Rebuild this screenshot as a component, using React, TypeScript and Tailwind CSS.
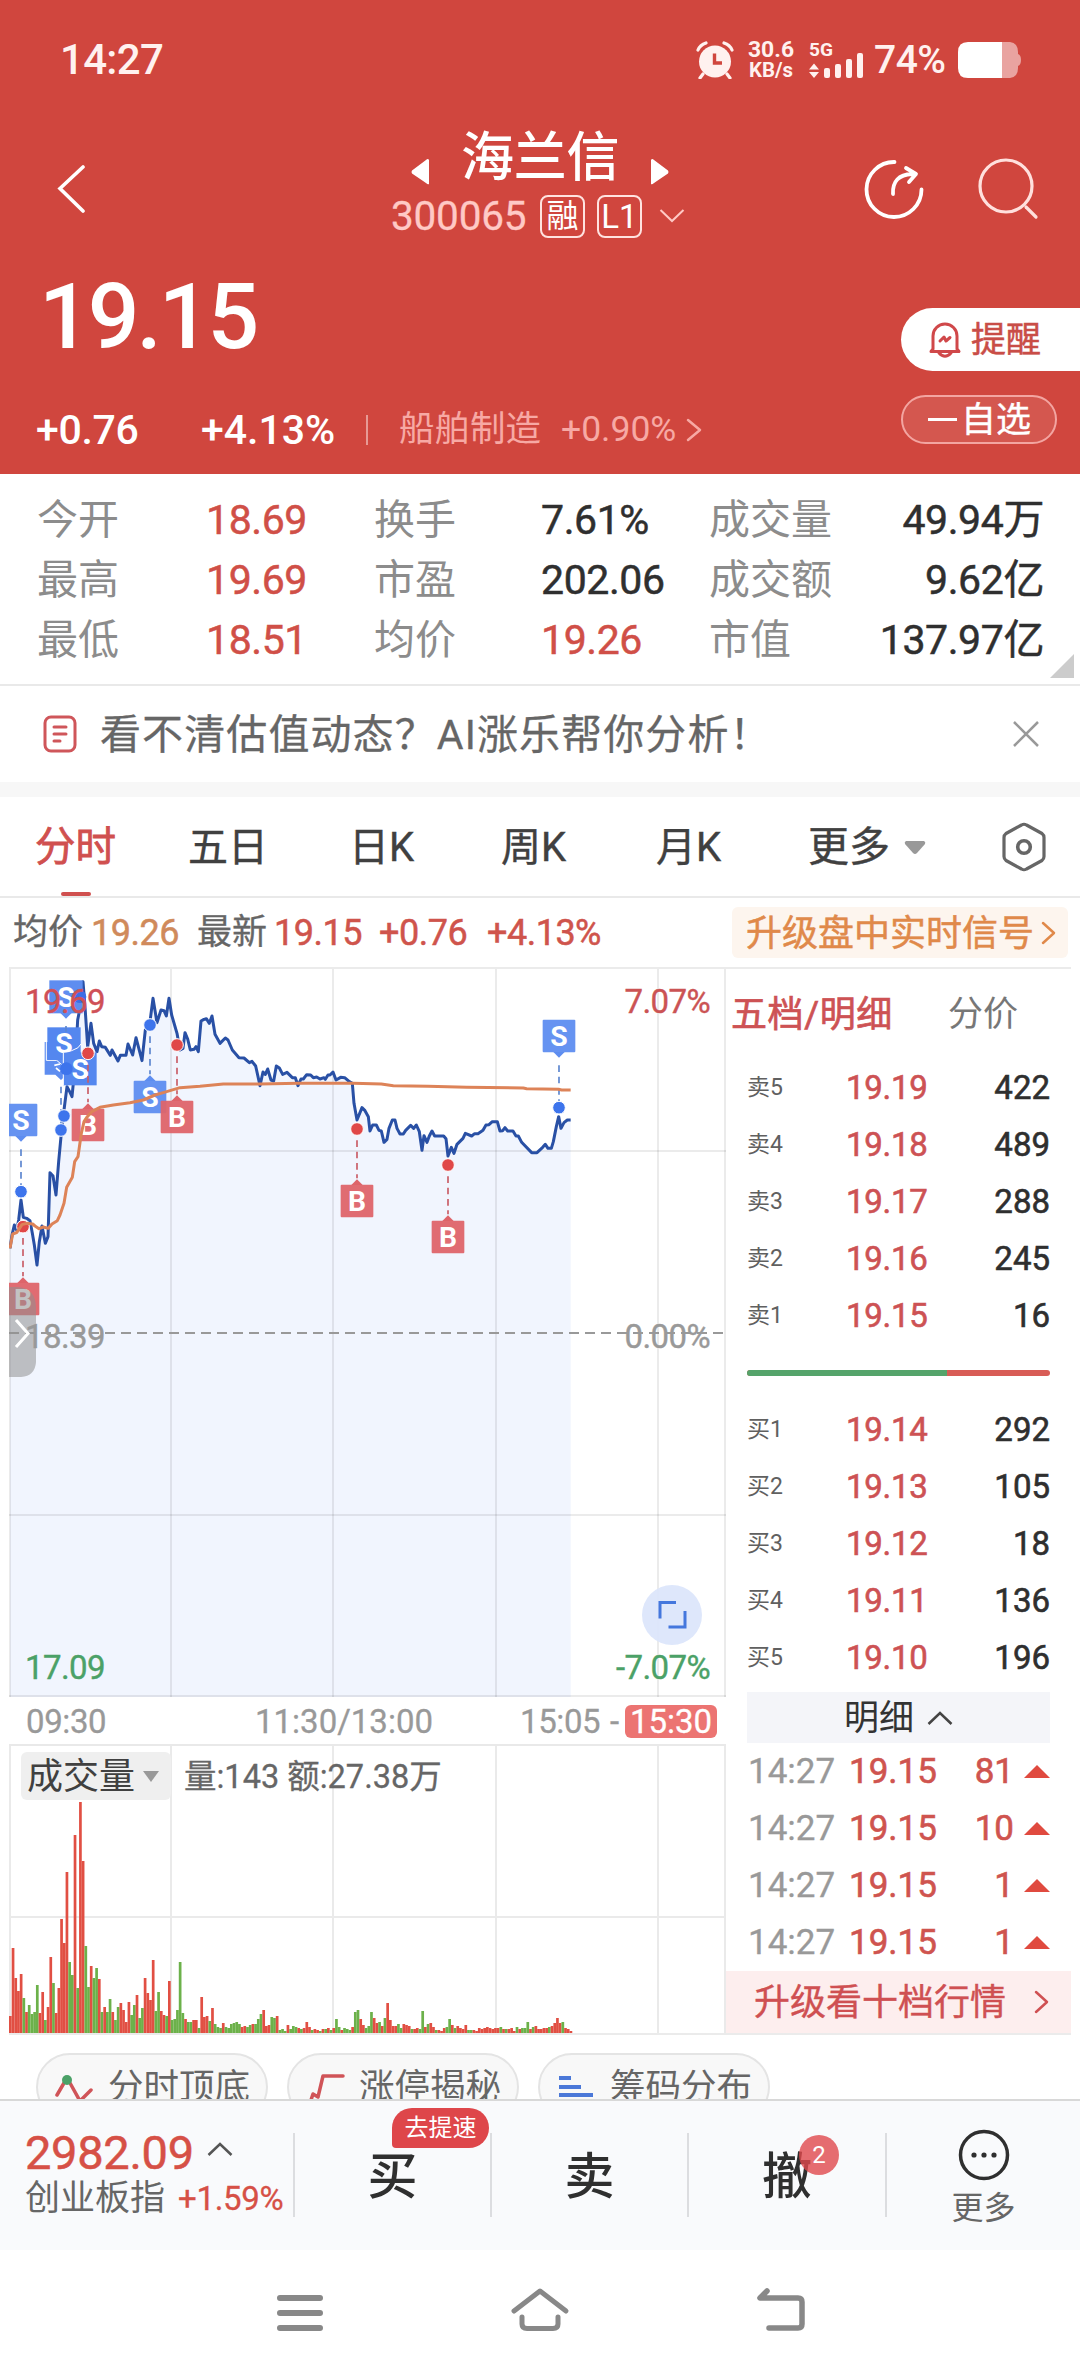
import type { ReactNode } from "react";

type Tone = "up" | "flat";

const STATS: { label: string; value: string; tone: Tone }[][] = [
  [
    { label: "今开", value: "18.69", tone: "up" },
    { label: "换手", value: "7.61%", tone: "flat" },
    { label: "成交量", value: "49.94万", tone: "flat" },
  ],
  [
    { label: "最高", value: "19.69", tone: "up" },
    { label: "市盈", value: "202.06", tone: "flat" },
    { label: "成交额", value: "9.62亿", tone: "flat" },
  ],
  [
    { label: "最低", value: "18.51", tone: "up" },
    { label: "均价", value: "19.26", tone: "up" },
    { label: "市值", value: "137.97亿", tone: "flat" },
  ],
];

const SELLS = [
  ["卖5", "19.19", "422"],
  ["卖4", "19.18", "489"],
  ["卖3", "19.17", "288"],
  ["卖2", "19.16", "245"],
  ["卖1", "19.15", "16"],
];

const BUYS = [
  ["买1", "19.14", "292"],
  ["买2", "19.13", "105"],
  ["买3", "19.12", "18"],
  ["买4", "19.11", "136"],
  ["买5", "19.10", "196"],
];

const TICKS = ["81", "10", "1", "1"];

// one entry per minute: r = up, g = down, followed by the bar height
const VOLUME =
  "r17 r85 r55 r42 r59 g35 r21 g28 g19 g21 g48 r20 r41 g13 r26 r76 g50 r20 r45 r114 r90 r161 g71 g58 r198 g45 r231 r172 g87 g46 r67 g55 g65 r54 g21 r26 g21 g34 r21 g13 g26 r30 r23 r11 r31 g18 g28 r38 g15 g25 r55 r40 r33 r73 g22 g41 r22 r18 g17 r52 g13 g14 g23 g71 g20 r14 g11 g11 r13 r13 g5 r36 r16 r17 g12 r25 g9 g6 g5 r10 g6 g5 g9 g10 g11 g9 r6 r7 g6 g8 r9 g9 g14 g19 r23 r7 r8 g16 g15 r17 g3 g4 g2 r8 g4 g7 g6 r5 g4 r5 r11 r6 g3 r4 r3 g2 r4 g4 r5 g3 r5 g14 g6 r3 g5 g4 g3 r6 g21 g23 r14 r8 g5 g7 g21 r15 r10 g11 r7 g15 r30 r13 r7 r7 g9 g5 r9 r8 r7 g4 r4 r5 g4 g22 r6 g9 r10 r6 g3 r3 r2 r5 g6 g14 r8 g5 r7 r5 r4 r8 g3 g3 r3 r2 r5 r4 r5 r6 r5 r4 r5 r5 g6 r4 g4 r4 r5 r2 g6 r4 g5 g5 g11 r4 g6 r7 r4 r4 r5 r5 g6 r7 r10 r15 r10 g11 r5 r4 r2".split(
    " "
  );

// price and average lines are stored at 3x
const PRICE =
  "30,925 36,885 43,855 50,870 56,840 63,780 70,832 80,835 90,842 97,880 103,915 111,975 118,905 126,858 136,910 144,890 150,698 159,708 168,765 176,665 183,590 192,510 201,440 209,455 216,470 226,370 233,240 238,215 245,145 249,125 255,200 263,320 273,250 281,310 291,335 298,303 305,320 316,322 331,346 336,330 354,363 361,346 378,346 384,312 398,345 408,293 426,362 436,270 450,245 459,175 471,248 483,210 492,212 499,228 507,175 515,225 531,280 540,330 549,325 555,278 563,297 571,330 582,328 588,320 595,335 603,243 612,238 619,236 628,250 636,228 645,283 660,310 676,294 684,300 697,330 717,353 732,354 748,368 756,364 767,378 780,437 789,396 796,403 803,387 813,420 821,423 829,378 838,384 848,403 861,397 877,413 886,413 894,437 903,417 910,417 920,404 932,405 940,413 950,411 960,417 972,413 976,418 984,405 990,405 999,396 1008,420 1022,412 1034,413 1048,425 1057,430 1062,490 1071,540 1086,503 1095,512 1105,530 1110,573 1118,555 1129,555 1137,571 1144,573 1152,607 1161,598 1167,565 1177,540 1185,540 1191,565 1200,582 1210,582 1217,571 1232,556 1241,565 1249,555 1258,575 1266,631 1272,587 1281,607 1288,588 1296,573 1304,588 1331,588 1338,596 1344,648 1354,622 1362,640 1371,613 1389,595 1396,580 1415,588 1424,581 1434,581 1449,571 1458,555 1467,554 1477,545 1492,545 1500,573 1508,572 1515,563 1523,573 1539,573 1548,588 1555,588 1565,607 1595,638 1611,638 1628,622 1636,613 1644,625 1654,625 1660,605 1669,560 1676,530 1683,565 1692,548 1702,540 1712,540";

const AVERAGE =
  "30,925 38,882 50,878 66,854 80,850 98,852 105,858 117,866 130,861 145,865 156,852 172,842 180,825 192,790 200,742 217,712 224,665 234,650 244,580 252,545 262,530 275,515 300,502 340,495 390,488 430,480 465,465 500,455 540,443 600,439 670,432 780,432 895,430 1060,430 1144,432 1180,437 1284,439 1400,442 1570,444 1580,446 1676,448 1685,450 1712,450";

function Chevron({ className, w = 14, h = 24, sw = 2.5 }: { className?: string; w?: number; h?: number; sw?: number }) {
  return (
    <svg width={w} height={h} className={className} fill="none" stroke="currentColor" strokeWidth={sw} strokeLinecap="round" strokeLinejoin="round">
      <path d={`M2 2L${w - 2} ${h / 2}L2 ${h - 2}`} />
    </svg>
  );
}

function StatusBar() {
  return (
    <div className="flex h-[120px] items-center pl-[60px] text-[#fff1ef]">
      <span className="w-[636px] text-[42px] font-medium tracking-[-0.700px]">14:27</span>
      <svg width="38" height="38" viewBox="0 0 38 38" fill="none">
        <circle cx="19" cy="20.5" r="16" fill="currentColor" />
        <path d="M2 9Q4 4 10 2M36 9Q34 4 28 2M7 33L4 37M31 33L34 37" stroke="currentColor" strokeWidth="3.2" strokeLinecap="round" />
        <path d="M18.500 12.500V22H26" stroke="#d0463e" strokeWidth="3.4" />
      </svg>
      <svg className="ml-[14px]" width="47" height="44" viewBox="0 0 47 44" fill="currentColor" fontSize="22" fontWeight="700">
        <text x="0" y="19" textLength="46" lengthAdjust="spacingAndGlyphs">30.6</text>
        <text x="1" y="39" fontSize="20" textLength="44" lengthAdjust="spacingAndGlyphs">KB/s</text>
      </svg>
      <svg className="ml-[14px]" width="56" height="44" viewBox="0 0 56 44">
        <text x="0" y="18" fontSize="18" fontWeight="700" textLength="24" lengthAdjust="spacingAndGlyphs" fill="currentColor">5G</text>
        <g fill="currentColor">
          <path d="M0 31.500L5 25.500L10 31.500ZM0 34L5 40L10 34Z" />
          <rect x="15" y="30" width="6" height="10" rx="2" />
          <rect x="26" y="26" width="6" height="14" rx="2" />
          <rect x="37" y="21" width="6" height="19" rx="2" />
          <rect x="48" y="15" width="6" height="25" rx="2" />
        </g>
      </svg>
      <span className="ml-[9px] w-[84px] text-[39px] font-medium tracking-[-0.500px]">74%</span>
      <svg width="64" height="36" viewBox="0 0 64 36">
        <path d="M44 0H52Q60 1 60 10V12Q63 13 63 18Q63 23 60 24V26Q60 35 52 36H44Z" fill="#e9a3a0" />
        <path d="M10 0H44V36H10Q0 36 0 26V10Q0 0 10 0Z" fill="#fff" />
      </svg>
    </div>
  );
}

function TitleBar() {
  return (
    <div className="flex h-[140px] pl-[56px] text-white">
      <svg className="mt-[45px]" width="32" height="48" fill="none" stroke="currentColor" strokeWidth="3.6" strokeLinecap="round">
        <path d="M27 2L4 23.500L27 46" />
      </svg>
      <div className="ml-[303px] flex w-[340px] flex-col pt-[11px]">
        <div className="flex h-[54px] pl-[20px]">
          <svg className="mt-[27px]" width="18" height="28"><path d="M18 2V26Q17 27 15 25L1 15.500Q0 14 1 12.500L15 2Q17 0 18 2Z" fill="currentColor" /></svg>
          <span className="mt-px ml-[32px] w-[158px] text-[53px] font-medium tracking-[-0.2px]">海兰信</span>
          <svg className="mt-[27px] ml-[32px]" width="18" height="28"><path d="M0 2V26Q1 27 3 25L17 15.500Q18 14 17 12.500L3 2Q1 0 0 2Z" fill="currentColor" /></svg>
        </div>
        <div className="mt-[7px] flex h-[48px] items-center text-[#ffc9c5]">
          <span className="w-[149px] text-[40.500px] tracking-[-0.200px] [-webkit-text-stroke:0.3px]">300065</span>
          <span className="flex h-[43px] w-[45px] items-center justify-center rounded-[8px] border-2 border-[#ffe3e0] text-[32px] text-white">融</span>
          <span className="ml-[12px] flex h-[43px] w-[45px] items-center justify-center rounded-[8px] border-2 border-[#ffe3e0] text-[33px] text-white">L1</span>
          <svg className="ml-[17px]" width="26" height="16" fill="none" stroke="currentColor" strokeWidth="2"><path d="M1.500 2L13 13L24.500 2" /></svg>
        </div>
      </div>
      <svg className="mt-[38px] ml-[132px]" width="64" height="64" fill="none" stroke="currentColor" strokeWidth="3.8" strokeLinecap="round" strokeLinejoin="round">
        <path d="M31.500 4A27.500 27.500 0 1 0 58.500 31.500" />
        <path d="M30 36Q29 17 49 16M43 10L53 16L46 24" />
      </svg>
      <svg className="mt-[36px] ml-[48px]" width="64" height="64" fill="none" stroke="#ffe0dd" strokeWidth="3.2" strokeLinecap="round">
        <circle cx="31" cy="30" r="26" />
        <path d="M51 51L61 61" />
      </svg>
    </div>
  );
}

function PriceBlock() {
  return (
    <div className="flex h-[214px] text-white">
      <div className="w-[901px]">
        <div className="flex h-[114px] items-center pl-[39px] text-[91px] font-medium tracking-[-3px]">19.15</div>
        <div className="mt-[32px] flex h-[48px] items-center pl-[36px]">
          <span className="w-[165px] text-[41px] font-medium tracking-[-0.300px]">+0.76</span>
          <span className="w-[165px] text-[41px] font-medium">+4.13%</span>
          <span className="h-[30px] w-[2px] bg-[#e79a95]" />
          <span className="ml-[31px] w-[162px] text-[35.500px] text-[#f7a9a4]">船舶制造</span>
          <span className="w-[125px] text-[35.500px] text-[#f7a9a4]">+0.90%</span>
          <Chevron className="text-[#f7a9a4]" w={16} />
        </div>
      </div>
      <div className="flex-1 pt-[48px]">
        <div className="flex h-[63px] items-center rounded-l-full bg-white pl-[27px] text-[#c94d47]">
          <svg width="34" height="36" viewBox="0 0 34 36" fill="none" stroke="#d0484a" strokeWidth="3" strokeLinecap="round" strokeLinejoin="round">
            <path d="M5 27V14A12 12 0 0 1 29 14V27L31 29.500H3Z" />
            <path d="M12 19L16 15L18 19L22 15.500M11 31Q17 37.500 23 31" />
          </svg>
          <span className="mt-[2px] ml-[9px] text-[35px] [-webkit-text-stroke:0.5px]">提醒</span>
        </div>
        <div className="mt-[24px] flex h-[49px] w-[156px] items-center rounded-full border-2 border-[#f3a5a1] bg-[#d4574f] pl-[25px]">
          <span className="h-[3.500px] w-[29px] bg-white" />
          <span className="mt-[2px] ml-[4px] text-[35px] [-webkit-text-stroke:0.4px]">自选</span>
        </div>
      </div>
    </div>
  );
}

function Stats() {
  return (
    <div className="relative flex h-[212px] flex-col border-b-2 border-[#e9e9e9] pt-[16px] text-[41px]">
      {STATS.map((row) => (
        <div key={row[0].label} className="grid h-[60px] grid-cols-[169px_168px_167px_168px_124px_211px] items-center pl-[37px]">
          {row.map((s, i) => [
            <span key={s.label} className="text-[#8c8c8c]">{s.label}</span>,
            <span
              key={s.value}
              className={`${s.tone === "up" ? "text-[#d04f47]" : "text-[#2f2f2f]"} ${i === 2 ? "text-right" : ""} tracking-[-0.400px] [-webkit-text-stroke:0.5px]`}
            >
              {s.value}
            </span>,
          ])}
        </div>
      ))}
      <svg className="absolute right-[6px] bottom-[6px]" width="24" height="24"><path d="M24 0V24H0Z" fill="#ccc" /></svg>
    </div>
  );
}

function Notice() {
  return (
    <div className="flex h-[96px] items-center pl-[43px] text-[#666]">
      <svg width="34" height="38" fill="none" stroke="#cf565a" strokeWidth="3" strokeLinecap="round">
        <rect x="2" y="2" width="30" height="34" rx="6" />
        <path d="M11 12H23M11 19H23M11 26H17" />
      </svg>
      <span className="mt-[2px] ml-[23px] text-[41px] tracking-[1.100px] [-webkit-text-stroke:0.3px]">看不清估值动态？AI涨乐帮你分析！</span>
      <svg className="mr-[40px] ml-auto" width="28" height="28" stroke="#999" strokeWidth="2.500"><path d="M2 2L26 26M26 2L2 26" /></svg>
    </div>
  );
}

function Tabs() {
  return (
    <div className="relative flex h-[101px] items-center border-b-2 border-[#e9e9e9] pt-[2px] pl-[35px] text-[40px] text-[#404040] [-webkit-text-stroke:0.4px]">
      <span className="w-[153px] text-[40.500px] text-[#d0504f] [-webkit-text-stroke:0.8px]">分时</span>
      <span className="w-[161px]">五日</span>
      <span className="w-[152px]">日K</span>
      <span className="w-[155px]">周K</span>
      <span className="w-[152px]">月K</span>
      <span className="w-[96px] text-[41px]">更多</span>
      <svg width="22" height="14"><path d="M2 0H20Q22 1 21 3L13 12Q11 14 9 12L1 3Q0 1 2 0Z" fill="#999" /></svg>
      <svg className="-mt-[2px] ml-[75px]" width="46" height="50" fill="none" stroke="#666" strokeWidth="3.200" strokeLinejoin="round">
        <path d="M20.500 3Q23 1.500 25.500 3L41 11.500Q43 13 43 15.500V34.500Q43 37 41 38.500L25.500 47Q23 48.500 20.500 47L5 38.500Q3 37 3 34.500V15.500Q3 13 5 11.500Z" />
        <circle cx="23" cy="25" r="6.300" strokeWidth="3.600" />
      </svg>
      <span className="absolute bottom-0 left-[61px] h-[4px] w-[30px] rounded-full bg-[#d0504f]" />
    </div>
  );
}

function QuoteLine() {
  return (
    <div className="flex h-[69px] items-center pl-[13px] text-[36px] text-[#cf544c] [-webkit-text-stroke:0.5px]">
      <span className="w-[78px] text-[35px] text-[#666] [-webkit-text-stroke:0.3px]">均价</span>
      <span className="w-[106px] tracking-[-0.500px] text-[#d08a5b]">19.26</span>
      <span className="w-[77px] text-[35px] text-[#666] [-webkit-text-stroke:0.3px]">最新</span>
      <span className="w-[105px] tracking-[-0.500px]">19.15</span>
      <span className="w-[108px] tracking-[-0.500px]">+0.76</span>
      <span className="w-[245px] tracking-[-0.500px]">+4.13%</span>
      <div className="flex h-[51px] w-[336px] items-center rounded-[6px] bg-[#fdf5ee] pl-[14px] text-[36px] text-[#e0894a]">
        <span className="mt-[2px] w-[295px]">升级盘中实时信号</span>
        <Chevron w={15} />
      </div>
    </div>
  );
}

type MarkProps = { x: number; y: number; dot: number; kind: "S" | "B"; below?: boolean };

// order marker: flag box, dashed leader and the dot on the price line
function Mark({ x, y, dot, kind, below }: MarkProps) {
  const fill = kind === "S" ? "#5e8df0" : "#de646a";
  const dotFill = kind === "S" ? "#3d74ec" : "#e04848";
  return (
    <g>
      <path
        d={below ? `M${x} ${dot + 34}V${y - 68}` : `M${x} ${y + 88}V${dot - 14}`}
        stroke={kind === "S" ? "#5b85cf" : "#c95c66"}
        strokeWidth="5"
        strokeDasharray="20 14"
      />
      <path
        d={below ? `M${x - 17} ${y - 48}L${x} ${y - 65}L${x + 17} ${y - 48}Z` : `M${x - 17} ${y + 48}L${x} ${y + 65}L${x + 17} ${y + 48}Z`}
        fill={fill}
      />
      <rect x={x - 49} y={y - 49} width="98" height="98" rx="3" fill={fill} fillOpacity="0.95" />
      <text x={x} y={y + 30} textAnchor="middle" fontSize="85" fontWeight="700" fill="#fff">{kind}</text>
      <circle cx={x} cy={dot} r="19" fill={dotFill} stroke="#fff" strokeWidth="3" />
    </g>
  );
}

function PriceChart() {
  return (
    <svg className="block" width="718" height="728" viewBox="9 969 718 728">
      <path d={`M10 1697V1248L${PRICE.split(" ").map((p) => p.split(",").map(Number)).map(([x, y]) => `${x / 3} ${940 + y / 3}`).join("L")}V1697Z`} fill="#f1f5fe" />
      <g stroke="#000" strokeOpacity="0.08" strokeWidth="2">
        <path d="M10 968V1697M171 968V1697M333 968V1697M496 968V1697M658 968V1697M725 968V1697" />
        <path d="M9 1151H726M9 1515H726" />
        <path d="M9 1696H726" />
      </g>
      <path d="M9 1333H726" stroke="#999" strokeWidth="2" strokeDasharray="10 6" />
      <g transform="translate(0 940) scale(0.33333)">
        <polyline points={PRICE} fill="none" stroke="#2950a5" strokeWidth="9" strokeLinejoin="round" />
        <Mark x={63} y={540} dot={755} kind="S" />
        <path d="M183 440V560" stroke="#5b85cf" strokeWidth="5" strokeDasharray="20 14" />
        <path d="M134 306H232V404H200L183 420L166 404H134Z" fill="#5e8df0" />
        <circle cx="183" cy="570" r="19" fill="#3d74ec" stroke="#fff" strokeWidth="3" />
        <path d="M139 304V361H170L190 378L203 361H242V337" fill="none" stroke="#fff" strokeWidth="3" />
        <rect x="142" y="262" width="100" height="98" fill="#5487ef" />
        <text x="192" y="340" textAnchor="middle" fontSize="85" fontWeight="700" fill="#fff">S</text>
        <path d="M198 258V275" stroke="#5b85cf" strokeWidth="5" />
        <rect x="148" y="121" width="100" height="99" fill="#5e8df0" />
        <path d="M181 219L198 236L215 219Z" fill="#5e8df0" />
        <text x="198" y="200" textAnchor="middle" fontSize="85" fontWeight="700" fill="#fff">S</text>
        <circle cx="240" cy="170" r="19" fill="#3d6ee6" />
        <rect x="190" y="337" width="100" height="99" fill="#5487ef" />
        <path d="M190 436V337L215 332Q238 325 243 312" fill="none" stroke="#fff" strokeWidth="3" />
        <circle cx="199" cy="386" r="19" fill="#3d74ec" />
        <path d="M163 376L180 372M168 384L180 394" stroke="#fff" strokeWidth="5" />
        <text x="241" y="417" textAnchor="middle" fontSize="85" fontWeight="700" fill="#fff">S</text>
        <circle cx="192" cy="528" r="19" fill="#3d74ec" stroke="#fff" strokeWidth="3" />
        <Mark x={264} y={555} dot={340} kind="B" below />
        <Mark x={69} y={1077} dot={860} kind="B" below />
        <Mark x={450} y={471} dot={255} kind="S" below />
        <Mark x={531} y={531} dot={315} kind="B" below />
        <Mark x={1071} y={783} dot={567} kind="B" below />
        <Mark x={1344} y={891} dot={675} kind="B" below />
        <Mark x={1677} y={288} dot={503} kind="S" />
        <polyline points={AVERAGE} fill="none" stroke="#dd8358" strokeWidth="9" strokeLinejoin="round" />
      </g>
      <path d="M9 1287H17Q36 1288 36 1308V1362Q35 1376 21 1377H9Z" fill="#8f8f8f" fillOpacity="0.55" />
      <g fontSize="33" letterSpacing="-0.6" strokeWidth="0.4">
        <text x="25" y="1013" fill="#cf5057" stroke="#cf5057">19.69</text>
        <text x="710" y="1013" textAnchor="end" fill="#cb5354" stroke="#cb5354">7.07%</text>
        <text x="25" y="1348" fill="#999" stroke="#999">18.39</text>
        <text x="710" y="1348" textAnchor="end" fill="#999" stroke="#999">0.00%</text>
        <text x="25" y="1679" fill="#4ba167" stroke="#4ba167">17.09</text>
        <text x="710" y="1679" textAnchor="end" fill="#4ba167" stroke="#4ba167">-7.07%</text>
      </g>
      <path d="M16 1320L28 1333.500L16 1347" fill="none" stroke="#fff" strokeWidth="3" />
      <circle cx="672" cy="1615" r="30" fill="#dbe5fb" fillOpacity="0.92" />
      <path d="M660 1618.500V1602.500H676M685 1611V1627H668.500" fill="none" stroke="#4477dd" strokeWidth="3" />
    </svg>
  );
}

function VolumeChart() {
  return (
    <div className="relative h-[287px]">
      <svg className="block" width="718" height="287" viewBox="9 1746 718 287">
        <path d="M10 1746V2033M171 1746V2033M333 1746V2033M496 1746V2033M658 1746V2033M725 1746V2033M9 1917H726" stroke="#eaeaea" strokeWidth="2" />
        {VOLUME.map((v, i) => {
          const h = Number(v.slice(1));
          return <rect key={i} x={9 + i * 2.695} y={2033 - h} width="2.700" height={h} fill={v[0] === "r" ? "#e14f43" : "#6cb14a"} />;
        })}
      </svg>
      <div className="absolute top-[6px] left-[12px] flex h-[48px] items-center">
        <div className="flex h-[48px] w-[150px] items-center rounded-[6px] bg-[#efefef] pt-[2px] pl-[6px] text-[36px] text-[#404040]">
          成交量
          <svg className="ml-[8px]" width="16" height="12"><path d="M0 0H16L8 11Z" fill="#999" /></svg>
        </div>
        <span className="mt-[3px] ml-[13px] text-[32.500px] whitespace-pre text-[#666] [-webkit-text-stroke:0.3px]">量:143 额:27.38万</span>
      </div>
    </div>
  );
}

function DepthRows({ rows }: { rows: string[][] }) {
  return (
    <>
      {rows.map(([label, price, qty]) => (
        <div key={label} className="flex h-[57px] items-center pr-[21px] pl-[21px] text-[33px] [-webkit-text-stroke:0.6px]">
          <span className="w-[99px] text-[23px] text-[#606060] [-webkit-text-stroke:0px]">{label}</span>
          <span className="tracking-[-0.300px] text-[#cd5254]">{price}</span>
          <span className="ml-auto text-[#2f2f2f]">{qty}</span>
        </div>
      ))}
    </>
  );
}

function OrderBook() {
  return (
    <div className="w-[345px]">
      <div className="flex h-[90px] items-center pt-px pl-[5px] text-[36px]">
        <span className="w-[217px] tracking-[0.600px] text-[#cd5254] [-webkit-text-stroke:0.7px]">五档/明细</span>
        <span className="text-[35px] text-[#777]">分价</span>
      </div>
      <DepthRows rows={SELLS} />
      <div className="flex h-[57px] items-center pl-[21px]">
        <div className="flex h-[6px] w-[303px] overflow-hidden rounded-full bg-[#d85c56]">
          <div className="w-[200px] bg-[#55a46b]" />
        </div>
      </div>
      <DepthRows rows={BUYS} />
      <div className="mt-[6px] ml-[21px] flex h-[51px] w-[303px] items-center bg-[#f4f5f9] pt-px pl-[97px] text-[35px] text-[#333]">
        明细
        <svg className="ml-[13px]" width="26" height="16" fill="none" stroke="#444" strokeWidth="2.500"><path d="M1.500 14L13 3L24.500 14" /></svg>
      </div>
      {TICKS.map((qty, i) => (
        <div key={i} className="flex h-[57px] items-center pr-[21px] pl-[22px] text-[35px] text-[#cf544f]">
          <span className="w-[101px] text-[#999] [-webkit-text-stroke:0.3px]">14:27</span>
          <span className="[-webkit-text-stroke:0.6px]">19.15</span>
          <span className="ml-auto [-webkit-text-stroke:0.6px]">{qty}</span>
          <svg className="ml-[10px]" width="26" height="13"><path d="M13 0L26 13H0Z" fill="#e04a3f" /></svg>
        </div>
      ))}
      <div className="flex h-[62px] items-center bg-[#fdeeee] pr-[22px] pl-[28px] text-[36px] text-[#cf5052]">
        <span className="mt-[2px] [-webkit-text-stroke:0.4px]">升级看十档行情</span>
        <Chevron className="ml-auto" w={15} />
      </div>
    </div>
  );
}

function ChartArea() {
  return (
    <div className="mx-[9px] flex h-[1068px] border-y-2 border-[#ebebeb]">
      <div className="w-[717px] overflow-hidden">
        <PriceChart />
        <div className="flex h-[49px] items-center border-b-2 border-[#e9e9e9] pt-[2px] pl-[17px] text-[33px] text-[#999] [-webkit-text-stroke:0.3px]">
          <span className="w-[229px] tracking-[-0.400px]">09:30</span>
          <span className="w-[265px]">11:30/13:00</span>
          <span className="w-[90px] tracking-[-0.400px]">15:05</span>
          <span className="w-[15px]">-</span>
          <span className="flex h-[33px] w-[92px] items-center justify-center rounded-[6px] bg-[#ec7472] text-white">15:30</span>
        </div>
        <VolumeChart />
      </div>
      <OrderBook />
    </div>
  );
}

function Chip({ icon, children }: { icon: ReactNode; children: ReactNode }) {
  return (
    <div className="flex h-[68px] w-[232px] shrink-0 items-center rounded-full border-2 border-[#e4e4e4] bg-[#f8f8f8] pt-px pl-[17px] text-[35.500px] text-[#666]">
      <span className="w-[53px]">{icon}</span>
      {children}
    </div>
  );
}

function Chips() {
  return (
    <div className="flex h-[64px] gap-[19px] overflow-hidden pt-[18px] pl-[36px]">
      <Chip
        icon={
          <svg width="40" height="34" fill="none" stroke="#d05458" strokeWidth="3.500" strokeLinecap="round">
            <path d="M2 24L9 12M15 12L25 30L36 19" />
            <circle cx="12" cy="9" r="5" fill="#4ba167" stroke="none" />
          </svg>
        }
      >
        分时顶底
      </Chip>
      <Chip
        icon={
          <svg width="40" height="34" fill="none" stroke="#d05458" strokeWidth="3.500" strokeLinecap="round" strokeLinejoin="round">
            <path d="M4 32L7 23L12 26L17 5H37" />
          </svg>
        }
      >
        涨停揭秘
      </Chip>
      <Chip
        icon={
          <svg width="40" height="34" stroke="#4b78d8" strokeWidth="4">
            <path d="M2 7H14M2 16H24M2 24H36" />
          </svg>
        }
      >
        筹码分布
      </Chip>
    </div>
  );
}

function TradeBar() {
  return (
    <div className="flex h-[151px] border-t-2 border-[#d8d8d8] bg-[#f9fafc] text-[#2f2f2f]">
      <div className="w-[293px] pl-[25px]">
        <div className="mt-[25px] flex h-[52px] items-center">
          <span className="w-[182px] text-[47px] tracking-[-0.300px] text-[#d65046] [-webkit-text-stroke:0.5px]">2982.09</span>
          <svg className="-mt-[6px]" width="26" height="16" fill="none" stroke="#555" strokeWidth="2.500"><path d="M1.500 14L13 3L24.500 14" /></svg>
        </div>
        <div className="flex h-[40px] items-center">
          <span className="w-[153px] shrink-0 text-[35px] text-[#666]">创业板指</span>
          <span className="text-[33px] tracking-[-0.300px] text-[#d65046] [-webkit-text-stroke:0.3px]">+1.59%</span>
        </div>
      </div>
      <div className="mt-[32px] flex h-[84px] flex-1 text-[50px] font-medium">
        <div className="relative flex w-[197px] items-center justify-center border-l-2 border-[#dcdde0] pt-[3px]">
          买
          <span className="absolute -top-[25px] left-[97px] flex h-[40px] w-[97px] items-center justify-center rounded-[20px] rounded-bl-[4px] bg-[#de464a] text-[24px] font-normal text-white">去提速</span>
        </div>
        <div className="flex w-[197px] items-center justify-center border-l-2 border-[#dcdde0] pt-[3px]">卖</div>
        <div className="relative flex w-[198px] items-center justify-center border-l-2 border-[#dcdde0] pt-[3px]">
          撤
          <span className="absolute top-[2px] left-[110px] flex size-[40px] items-center justify-center rounded-full bg-[#e0484c]/80 text-[24px] font-normal text-white">2</span>
        </div>
        <div className="flex flex-1 flex-col items-center border-l-2 border-[#dcdde0]">
          <svg className="-mt-[4px] shrink-0" width="52" height="52" fill="none" stroke="#2f2f2f" strokeWidth="3.500">
            <circle cx="26" cy="26" r="23.500" />
            <g fill="#2f2f2f" stroke="none">
              <circle cx="16" cy="26" r="2.600" />
              <circle cx="26" cy="26" r="2.600" />
              <circle cx="36" cy="26" r="2.600" />
            </g>
          </svg>
          <span className="mt-[11px] shrink-0 text-[32px] font-normal text-[#666]">更多</span>
        </div>
      </div>
    </div>
  );
}

function SystemNav() {
  return (
    <div className="flex h-[126px] pt-[36px] pl-[276px]">
      <svg width="48" height="46" stroke="#888" strokeWidth="6" strokeLinecap="round"><path d="M4 12H44M4 27H44M4 42H44" /></svg>
      <svg className="ml-[186px]" width="60" height="48" fill="none" stroke="#888" strokeWidth="5" strokeLinecap="round" strokeLinejoin="round">
        <path d="M4 25L30 5L56 25" />
        <path d="M12 31V38Q12 42.500 17 42.500H43Q48 42.500 48 38V31" />
      </svg>
      <svg className="ml-[184px]" width="54" height="48" fill="none" stroke="#888" strokeWidth="5.500" strokeLinecap="round" strokeLinejoin="round">
        <path d="M13 5L6 12H44Q48 12 48 16V38Q48 42 44 42H15" />
      </svg>
    </div>
  );
}

export default function App() {
  return (
    <div className="h-[2376px] w-[1080px] overflow-hidden bg-white font-[Roboto,'Noto_Sans_CJK_SC',sans-serif] leading-none whitespace-nowrap">
      <header className="bg-[#d0463e]">
        <StatusBar />
        <TitleBar />
        <PriceBlock />
      </header>
      <Stats />
      <Notice />
      <div className="h-[15px] bg-[#f7f7f7]" />
      <Tabs />
      <QuoteLine />
      <ChartArea />
      <Chips />
      <TradeBar />
      <SystemNav />
    </div>
  );
}
